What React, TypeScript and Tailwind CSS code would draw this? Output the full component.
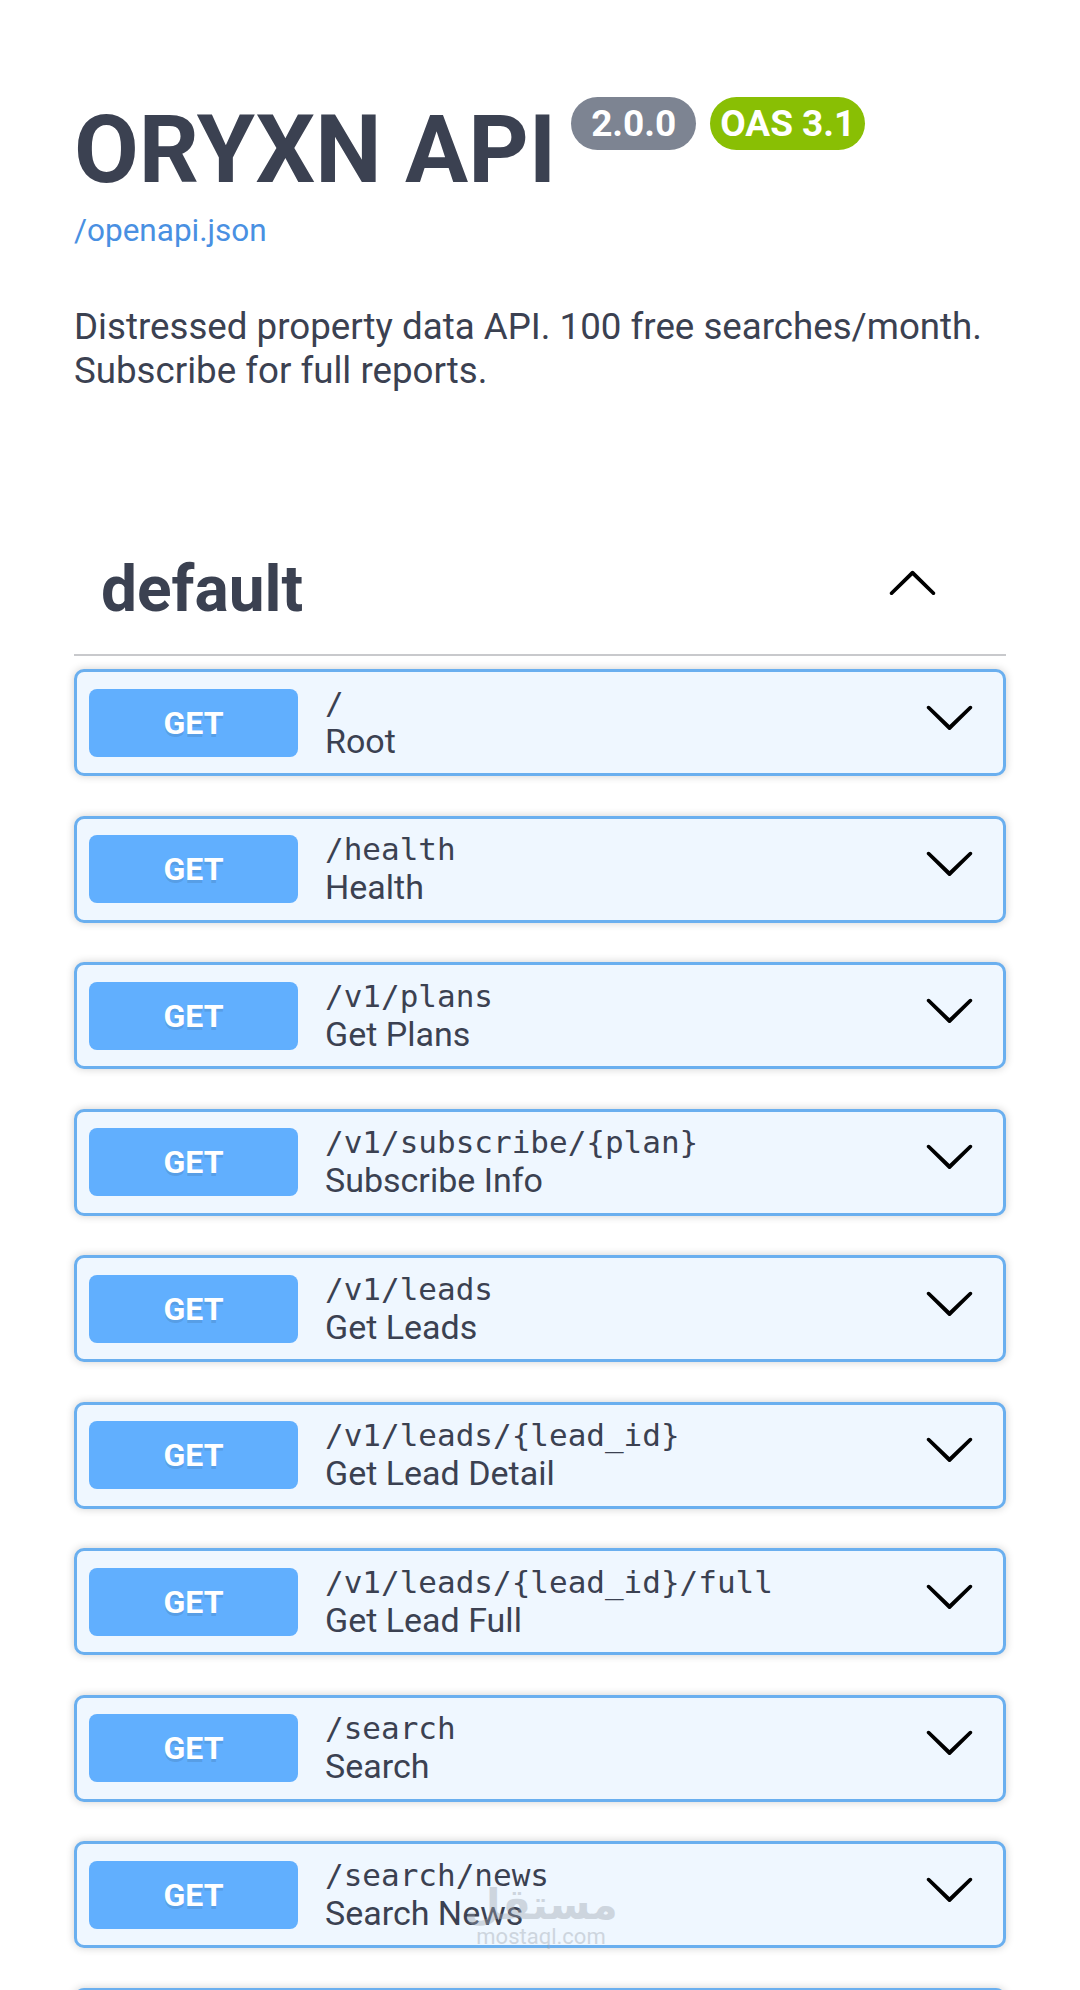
import React from "react";

const rows: { path: string; summary: string }[] = [
  { path: "/", summary: "Root" },
  { path: "/health", summary: "Health" },
  { path: "/v1/plans", summary: "Get Plans" },
  { path: "/v1/subscribe/{plan}", summary: "Subscribe Info" },
  { path: "/v1/leads", summary: "Get Leads" },
  { path: "/v1/leads/{lead_id}", summary: "Get Lead Detail" },
  { path: "/v1/leads/{lead_id}/full", summary: "Get Lead Full" },
  { path: "/search", summary: "Search" },
  { path: "/search/news", summary: "Search News" },
];

const ArrowDown = ({ className }: { className?: string }) => (
  <svg viewBox="0 0 20 20" className={className} fill="currentColor">
    <path d="M17.418 6.109c.272-.268.709-.268.979 0s.271.701 0 .969l-7.908 7.83c-.27.268-.707.268-.979 0l-7.908-7.83c-.27-.268-.27-.701 0-.969.271-.268.709-.268.979 0L10 13.25l7.418-7.141z" />
  </svg>
);

const ArrowUp = ({ className }: { className?: string }) => (
  <svg viewBox="0 0 20 20" className={className} fill="currentColor">
    <path d="M17.418 14.908c.272.268.709.268.979 0s.271-.701 0-.969l-7.908-7.83c-.27-.268-.707-.268-.979 0l-7.908 7.83c-.27.268-.27.701 0 .969.271.268.709.268.979 0L10 7.767l7.418 7.141z" />
  </svg>
);

const rowBox =
  "flex h-[107px] items-center rounded-[10px] border-[3px] border-[#6aafef] bg-[#eff7ff] pl-[12px] pr-[27px] shadow-[0_0_8px_rgba(0,0,0,0.19)]";

function Row({ path, summary }: { path: string; summary: string }) {
  return (
    <div className={rowBox}>
      <div
        className="flex h-[68px] w-[209px] shrink-0 items-center justify-center rounded-[8px] bg-[#61affe] text-[32px] font-bold text-white [text-shadow:0_3px_0_rgba(0,0,0,0.1)]"
        style={{ fontFamily: "Roboto, 'Liberation Sans', sans-serif" }}
      >
        GET
      </div>
      <div className="ml-[27px] flex min-w-0 flex-1 flex-col text-[#3b4151]">
        <div
          className="text-[31px] leading-[36px]"
          style={{ fontFamily: "'DejaVu Sans Mono', 'Liberation Mono', monospace" }}
        >
          {path}
        </div>
        <div
          className="text-[34px] leading-[40px]"
          style={{ fontFamily: "Roboto, 'Liberation Sans', sans-serif" }}
        >
          {summary}
        </div>
      </div>
      <ArrowDown className="mb-[13px] h-[53px] w-[53px] shrink-0 text-black" />
    </div>
  );
}

export default function App() {
  return (
    <div
      className="relative h-[1990px] w-full overflow-hidden bg-white text-[#3b4151]"
      style={{ fontFamily: "Roboto, 'Liberation Sans', sans-serif" }}
    >
      <div className="px-[74px] pt-[97px]">
        <div className="flex items-start">
          <h1 className="mt-[6px] text-[94px] font-bold leading-[94px] text-[#3b4151]">
            ORYXN API
          </h1>
          <div className="ml-[15px] flex gap-[14px]">
            <span className="flex h-[53px] w-[125px] items-center justify-center rounded-[27px] bg-[#7d8492] text-[37px] font-bold leading-[53px] text-white">
              2.0.0
            </span>
            <span className="flex h-[53px] w-[155px] items-center justify-center rounded-[27px] bg-[#89bf04] text-[37px] font-bold leading-[53px] text-white">
              OAS 3.1
            </span>
          </div>
        </div>
        <div className="mt-[14px] text-[31.5px] leading-[40px] text-[#4990e2]">
          /openapi.json
        </div>
        <p className="mt-[54px] text-[36.7px] leading-[44px] text-[#3b4151]">
          Distressed property data API. 100 free searches/month. Subscribe for full reports.
        </p>

        <div className="mt-[157px] flex items-center border-b-2 border-[#c8c9cc] pb-[24px] pl-[27px] pr-[67px]">
          <h3 className="flex-1 text-[64px] font-bold leading-[80px] text-[#3b4151]">default</h3>
          <ArrowUp className="mb-[18px] h-[53px] w-[53px] shrink-0 text-black" />
        </div>

        <div className="mt-[13px] flex flex-col gap-[39.5px]">
          {rows.map((r) => (
            <Row key={r.path} path={r.path} summary={r.summary} />
          ))}
          <div className={rowBox} />
        </div>
      </div>

      <div className="pointer-events-none absolute left-[476px] top-[1884px] flex w-[130px] flex-col items-center text-[#9ca3af] opacity-40">
        <span className="text-[42px] font-bold leading-[42px]" style={{ fontFamily: "'DejaVu Sans', sans-serif" }}>
          مستقل
        </span>
        <span className="text-[22px] leading-[22px]">mostaql.com</span>
      </div>
    </div>
  );
}
